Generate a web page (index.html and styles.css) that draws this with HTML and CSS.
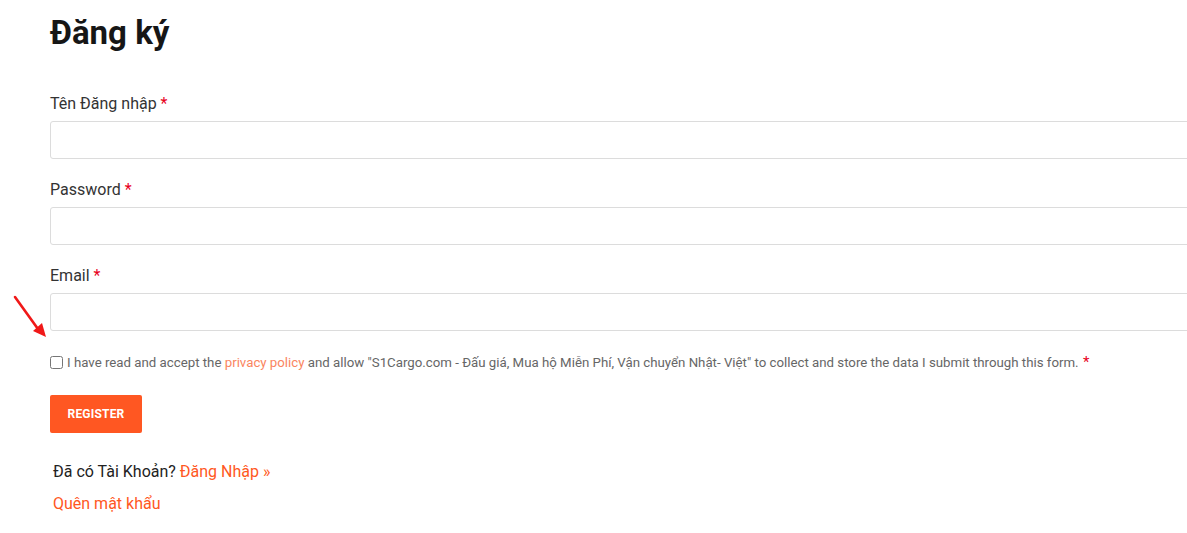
FILE: index.html
```html
<!DOCTYPE html>
<html lang="vi">
<head>
<meta charset="utf-8">
<title>Đăng ký</title>
<link rel="stylesheet" href="styles.css">
</head>
<body>
<div class="page">
  <h1 class="title">Đăng ký</h1>
  <form class="form">
    <div class="field">
      <label class="label">Tên Đăng nhập <span class="req">*</span></label>
      <input class="input" type="text">
    </div>
    <div class="field">
      <label class="label">Password <span class="req">*</span></label>
      <input class="input" type="password">
    </div>
    <div class="field">
      <label class="label">Email <span class="req">*</span></label>
      <input class="input" type="email">
    </div>
    <div class="consent">
      <input class="check" type="checkbox">
      <span class="consent-text">I have read and accept the <a class="policy" href="#">privacy policy</a> and allow "S1Cargo.com - Đấu giá, Mua hộ Miễn Phí, Vận chuyển Nhật- Việt" to collect and store the data I submit through this form. <span class="req req-lg">*</span></span>
    </div>
    <button class="btn" type="button">Register</button>
    <p class="foot">Đã có Tài Khoản? <a class="link" href="#">Đăng Nhập »</a></p>
    <p class="foot foot-2"><a class="link" href="#">Quên mật khẩu</a></p>
  </form>
  <svg class="arrow" width="50" height="50" viewBox="0 0 50 50">
    <line x1="15" y1="8" x2="38" y2="40" stroke="#f01818" stroke-width="2.6" stroke-linecap="round"/>
    <polygon points="46,48 33,42 42,34" fill="#f01818"/>
  </svg>
</div>
</body>
</html>
```
FILE: styles.css
```css
html, body {
  margin: 0;
  padding: 0;
  background: #fff;
  overflow: hidden;
}
body {
  font-family: Roboto, "Noto Sans", sans-serif;
  color: #333;
}
.page {
  position: relative;
  padding: 0 0 0 50px;
  width: 1200px;
}
.title {
  margin: 0;
  padding-top: 12px;
  font-size: 33px;
  font-weight: 700;
  line-height: 42px;
  color: #161616;
}
.form {
  margin-top: 37px;
}
.field {
  display: flex;
  flex-direction: column;
  margin-bottom: 18px;
}
.label {
  font-size: 16px;
  line-height: 26px;
  color: #333;
  margin-bottom: 4px;
}
.req {
  color: #e8001c;
}
.input {
  box-sizing: border-box;
  width: 1160px;
  height: 38px;
  border: 1px solid #dcdcdc;
  border-radius: 3px;
  margin: 0;
  background: #fff;
}
.consent {
  display: flex;
  align-items: center;
  padding-top: 3px;
  font-size: 13.25px;
  color: #666;
  line-height: 20px;
}
.check {
  margin: 0 4px 0 0;
  width: 13px;
  height: 13px;
}
.policy {
  color: #fa8560;
  text-decoration: none;
}
.req-lg {
  font-size: 15px;
  margin-left: 1px;
}
.btn {
  display: block;
  margin-top: 22px;
  width: 92px;
  height: 38px;
  border: 0;
  border-radius: 2px;
  background: #ff5722;
  color: #fff;
  font-family: Roboto, sans-serif;
  font-weight: 700;
  font-size: 12px;
  text-transform: uppercase;
  letter-spacing: 0.2px;
  padding: 0;
}
.foot {
  margin: 27px 0 0 3px;
  font-size: 16px;
  line-height: 24px;
  color: #222;
}
.foot-2 {
  margin-top: 8px;
}
.link {
  color: #ff5722;
  text-decoration: none;
}
.arrow {
  position: absolute;
  left: 0;
  top: 289px;
}
```
